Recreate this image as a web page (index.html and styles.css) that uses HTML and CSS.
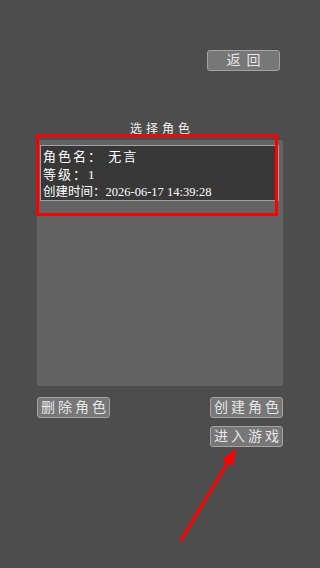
FILE: index.html
```html
<!DOCTYPE html>
<html lang="zh-CN">
<head>
	<meta charset="UTF-8">
	<title>选择角色</title>
	<link rel="stylesheet" href="styles.css">
</head>
<body>
	<div class="screen">
		<!-- 顶部 -->
		<div class="top">
			<div class="btn back">返回</div>
		</div>
		<div class="title">选择角色</div>
		<!-- 角色列表 -->
		<div class="panel">
			<div class="item">
				<p class="name">角色名： 无言</p>
				<p class="level">等级：1</p>
				<p class="time">创建时间：2026-06-17 14:39:28</p>
			</div>
		</div>
		<!-- 按钮 -->
		<div class="actions">
			<div class="btn">删除角色</div>
			<div class="btn">创建角色</div>
		</div>
		<div class="actions end">
			<div class="btn">进入游戏</div>
		</div>
		<!-- 标注 -->
		<div class="mark"></div>
		<svg class="arrow" width="320" height="568" viewBox="0 0 320 568">
			<line x1="181" y1="540" x2="229" y2="460" stroke="#f00" stroke-width="3" stroke-linecap="round"/>
			<polygon points="236,448 222,460 233,466" fill="#f00"/>
		</svg>
	</div>
</body>
</html>
```

FILE: styles.css
```css
*{
	margin:0;
	padding:0;
}
html,body{
	background:#4d4d4d;
}
body{
	font-family:"Liberation Serif","Noto Sans CJK SC",serif;
	color:#fff;
}
.screen{
	position:relative;
	width:320px;
	height:568px;
	overflow:hidden;
}
.top{
	display:flex;
	justify-content:flex-end;
	padding:50px 40px 0 0;
}
.btn{
	width:73px;
	height:21px;
	box-sizing:border-box;
	border:1px solid #a3a3a3;
	border-radius:3px;
	background:#777;
	color:#e6e6e6;
	font-size:14px;
	line-height:19px;
	text-align:center;
	letter-spacing:3px;
	text-indent:3px;
	cursor:pointer;
}
.back{
	letter-spacing:6px;
	text-indent:6px;
}
.title{
	margin-top:51px;
	height:14px;
	font-size:12px;
	line-height:14px;
	text-align:center;
	letter-spacing:4px;
	text-indent:4px;
	color:#f2f2f2;
}
.panel{
	margin:4px 37px 0;
	height:246px;
	box-sizing:border-box;
	padding:5px 4px 0 3px;
	background:#636363;
	border-radius:3px;
}
.item{
	height:56px;
	box-sizing:border-box;
	border:1px solid #a0a0a0;
	background:#383838;
	padding:2px 2px 0;
}
.item p{
	white-space:nowrap;
}
.name,.level{
	font-size:13px;
	line-height:18px;
	letter-spacing:2px;
}
.time{
	font-size:12.5px;
	line-height:17px;
}
.actions{
	display:flex;
	justify-content:space-between;
	margin:11px 37px 0;
}
.actions.end{
	justify-content:flex-end;
	margin-top:8px;
}
.mark{
	position:absolute;
	left:36px;
	top:134px;
	width:242px;
	height:82px;
	box-sizing:border-box;
	border:3px solid #f00;
}
.arrow{
	position:absolute;
	left:0;
	top:0;
}
```
